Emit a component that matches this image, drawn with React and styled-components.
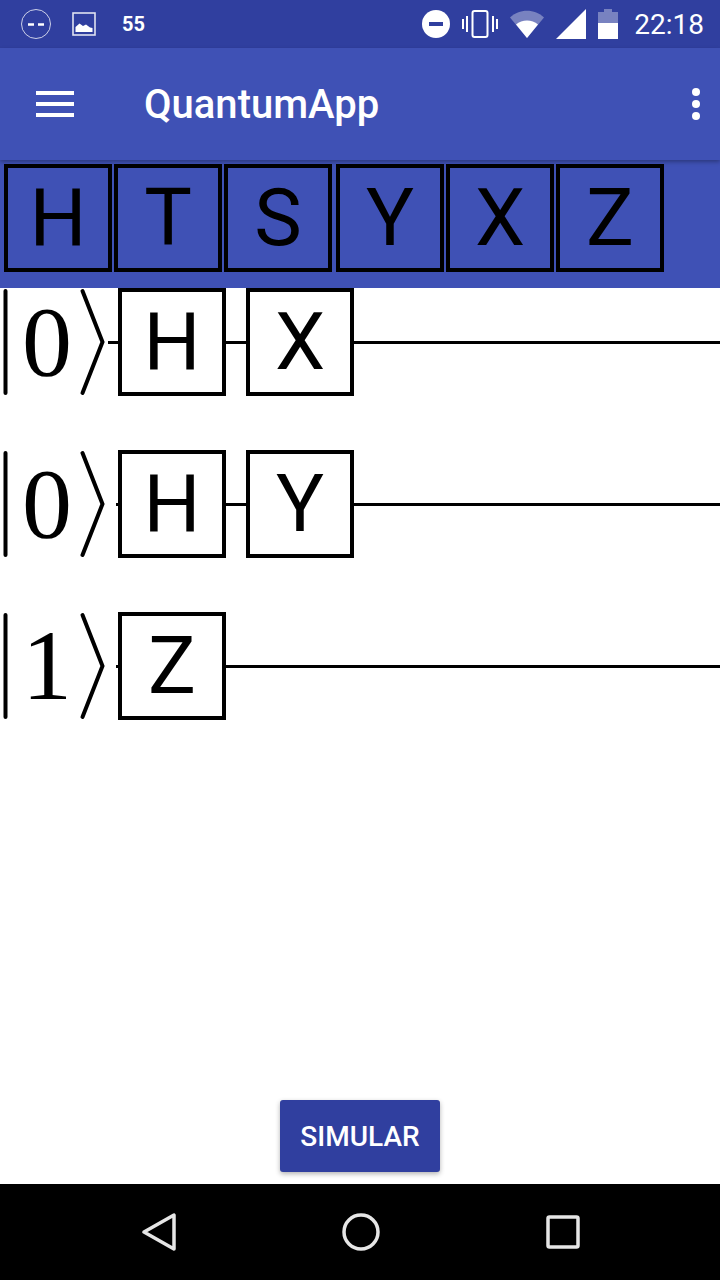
import React from 'react'
import styled, { createGlobalStyle } from 'styled-components'

const GlobalStyle = createGlobalStyle`
html, body {
  margin: 0;
  padding: 0;
  background: #ffffff;
}
`

const Screen = styled.div`
width: 720px;
height: 1280px;
display: flex;
flex-direction: column;
overflow: hidden;
background: #ffffff;
font-family: Roboto, "Liberation Sans", sans-serif;
`

const StatusBar = styled.div`
height: 48px;
flex: none;
display: flex;
align-items: center;
padding: 0 16px 0 20px;
background: #303f9f;
color: #ffffff;
`

const StatusLeft = styled.div`
display: flex;
align-items: center;
gap: 20px;
flex: 1;
`

const StatusRight = styled.div`
display: flex;
align-items: center;
gap: 12px;
`

const StatusCount = styled.span`
font-size: 20px;
font-weight: 700;
margin-left: 6px;
`

const Clock = styled.span`
font-size: 28px;
font-weight: 400;
margin-left: 4px;
`

const AppBar = styled.div`
height: 112px;
flex: none;
display: flex;
align-items: center;
padding: 0 20px 0 36px;
background: #3f51b5;
box-shadow: 0 2px 4px rgba(0, 0, 0, 0.3);
position: relative;
z-index: 1;
`

const AppTitle = styled.h1`
flex: 1;
margin: 0 0 0 70px;
color: #ffffff;
font-size: 40px;
font-weight: 500;
`

const Palette = styled.div`
height: 128px;
flex: none;
display: flex;
gap: 2px;
padding: 4px 0 0 4px;
box-sizing: border-box;
background: #3f51b5;
`

const Gate = styled.div`
width: 108px;
height: 108px;
flex: none;
display: flex;
align-items: center;
justify-content: center;
box-sizing: border-box;
border: 4px solid #000000;
background: ${(p) => (p.$filled ? 'transparent' : '#ffffff')};
color: #000000;
font-size: 80px;
line-height: 1;
margin-left: ${(p) => p.$shift || 0}px;
`

const Circuit = styled.div`
flex: 1;
display: flex;
flex-direction: column;
gap: 54px;
`

const Row = styled.div`
height: 108px;
display: flex;
align-items: center;
`

const Ket = styled.div`
width: ${(p) => p.$width}px;
height: 108px;
flex: none;
display: flex;
align-items: center;
`

const Digit = styled.span`
width: 62px;
margin-left: 16px;
margin-right: -78px;
font-family: "Liberation Serif", serif;
font-size: 100px;
line-height: 108px;
color: #000000;
text-align: center;
`

const Wire = styled.div`
height: 3px;
background: #000000;
flex: ${(p) => (p.$width ? `0 0 ${p.$width}px` : 1)};
`

const Footer = styled.div`
height: 84px;
flex: none;
display: flex;
justify-content: center;
`

const SimulateButton = styled.button`
width: 160px;
height: 72px;
border: none;
border-radius: 3px;
background: #303f9f;
color: #ffffff;
font-family: Roboto, sans-serif;
font-size: 28px;
font-weight: 500;
box-shadow: 0 2px 5px rgba(0, 0, 0, 0.3);
`

const NavBar = styled.div`
height: 96px;
flex: none;
display: flex;
align-items: center;
justify-content: space-between;
padding: 0 140px 0 142px;
background: #000000;
`

const KetMark = () => (
  <svg width="108" height="108" viewBox="0 0 108 108">
    <path d="M5.5 3V105" stroke="#000" strokeWidth="4" strokeLinecap="round" fill="none" />
    <path d="M82.5 3L102.5 54L82.5 105" stroke="#000" strokeWidth="4" strokeLinecap="round" fill="none" />
  </svg>
)

const DndIcon = () => (
  <svg width="32" height="32" viewBox="0 0 32 32">
    <circle cx="16" cy="16" r="14.5" fill="none" stroke="#fff" strokeOpacity="0.75" strokeWidth="1" />
    <path d="M8 16.500h6M18 16.500h6" stroke="#fff" strokeWidth="2.500" />
  </svg>
)

const ImageIcon = () => (
  <svg width="24" height="24" viewBox="0 0 24 24">
    <rect x="1" y="1" width="22" height="22" fill="none" stroke="#fff" strokeOpacity="0.85" strokeWidth="1.600" />
    <path d="M3.500 20V15L7.500 11.500L11 14L14 12.500L18 15.500L20.500 16V20Z" fill="#fff" />
  </svg>
)

const MinusCircle = () => (
  <svg width="28" height="28" viewBox="0 0 28 28">
    <circle cx="14" cy="14" r="14" fill="#fff" />
    <rect x="7" y="12" width="14" height="4" fill="#303f9f" />
  </svg>
)

const VibrateIcon = () => (
  <svg width="36" height="28" viewBox="0 0 36 28">
    <rect x="10.500" y="1" width="15" height="26" rx="2" fill="none" stroke="#fff" strokeWidth="2" />
    <path d="M1 9V19M5 6V22M31 6V22M35 9V19" stroke="#fff" strokeWidth="2" />
  </svg>
)

const WifiIcon = () => (
  <svg width="34" height="28" viewBox="0 0 34 28">
    <path d="M0 7.500C9 -1.500 25 -1.500 34 7.500L17 28Z" fill="#fff" fillOpacity="0.35" />
    <path d="M6 14.500C12 9 22 9 28 14.500L17 28Z" fill="#fff" />
  </svg>
)

const SignalIcon = () => (
  <svg width="30" height="30" viewBox="0 0 30 30">
    <path d="M0 30L30 0V30Z" fill="#fff" />
  </svg>
)

const BatteryIcon = () => (
  <svg width="20" height="30" viewBox="0 0 20 30">
    <path d="M6 0H14V3H20V14H0V3H6Z" fill="#fff" fillOpacity="0.35" />
    <rect x="0" y="14" width="20" height="16" fill="#fff" />
  </svg>
)

const MenuIcon = () => (
  <svg width="38" height="26" viewBox="0 0 38 26">
    <path d="M0 2H38M0 13H38M0 24H38" stroke="#fff" strokeWidth="4" />
  </svg>
)

const MoreIcon = () => (
  <svg width="8" height="32" viewBox="0 0 8 32">
    <circle cx="4" cy="4" r="4" fill="#fff" />
    <circle cx="4" cy="16" r="4" fill="#fff" />
    <circle cx="4" cy="28" r="4" fill="#fff" />
  </svg>
)

const BackIcon = () => (
  <svg width="34" height="38" viewBox="0 0 34 38">
    <path d="M2 19L32 2V36Z" fill="none" stroke="#e6e6e6" strokeWidth="3.500" strokeLinejoin="round" />
  </svg>
)

const HomeIcon = () => (
  <svg width="38" height="38" viewBox="0 0 38 38">
    <circle cx="19" cy="19" r="17" fill="none" stroke="#e6e6e6" strokeWidth="3.500" />
  </svg>
)

const RecentIcon = () => (
  <svg width="34" height="34" viewBox="0 0 34 34">
    <rect x="2" y="2" width="30" height="30" rx="1.500" fill="none" stroke="#e6e6e6" strokeWidth="3.500" />
  </svg>
)

const palette = [
  { label: 'H' },
  { label: 'T' },
  { label: 'S' },
  { label: 'Y', shift: 2 },
  { label: 'X' },
  { label: 'Z' },
]

const rows = [
  { state: '0', lead: 10, gates: ['H', 'X'] },
  { state: '0', lead: 2, gates: ['H', 'Y'] },
  { state: '1', lead: 2, gates: ['Z'] },
]

const App = () => {
  return (
    <Screen>
      <GlobalStyle />

      <StatusBar>
        <StatusLeft>
          <DndIcon />
          <ImageIcon />
          <StatusCount>55</StatusCount>
        </StatusLeft>
        <StatusRight>
          <MinusCircle />
          <VibrateIcon />
          <WifiIcon />
          <SignalIcon />
          <BatteryIcon />
          <Clock>22:18</Clock>
        </StatusRight>
      </StatusBar>

      <AppBar>
        <MenuIcon />
        <AppTitle>QuantumApp</AppTitle>
        <MoreIcon />
      </AppBar>

      <Palette>
        {palette.map((g) => (
          <Gate key={g.label} $filled $shift={g.shift}>{g.label}</Gate>
        ))}
      </Palette>

      <Circuit>
        {rows.map((row, i) => (
          <Row key={i}>
            <Ket $width={118 - row.lead}>
              <Digit>{row.state}</Digit>
              <KetMark />
            </Ket>
            <Wire $width={row.lead} />
            {row.gates.map((g, j) => (
              <React.Fragment key={g}>
                {j > 0 && <Wire $width={20} />}
                <Gate>{g}</Gate>
              </React.Fragment>
            ))}
            <Wire />
          </Row>
        ))}
      </Circuit>

      <Footer>
        <SimulateButton>SIMULAR</SimulateButton>
      </Footer>

      <NavBar>
        <BackIcon />
        <HomeIcon />
        <RecentIcon />
      </NavBar>
    </Screen>
  )
}

export default App
